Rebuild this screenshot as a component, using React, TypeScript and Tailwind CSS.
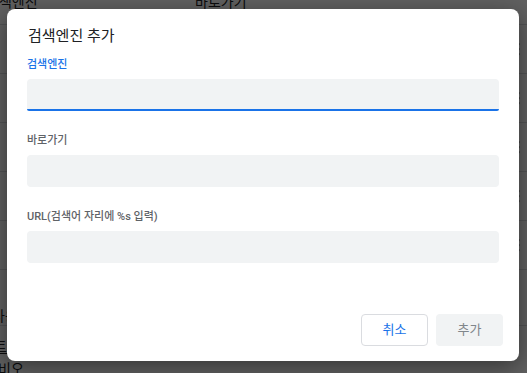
import React from "react";

const font = { fontFamily: 'Roboto, "Noto Sans CJK KR", "Noto Sans", sans-serif' };

function Dots() {
  return (
    <svg width="4" height="14" viewBox="0 0 4 14" className="text-[#5f6368]">
      <circle cx="2" cy="2" r="1.6" fill="currentColor" />
      <circle cx="2" cy="7" r="1.6" fill="currentColor" />
      <circle cx="2" cy="12" r="1.6" fill="currentColor" />
    </svg>
  );
}

function Field({ label, active }: { label: string; active?: boolean }) {
  return (
    <div className="flex flex-col">
      <div
        className={`h-4 leading-4 text-[11px] font-medium mb-[6px] ${
          active ? "text-[#1a73e8]" : "text-[#5f6368]"
        }`}
      >
        {label}
      </div>
      <div
        className={`h-[32px] rounded-[4px] bg-[#f1f3f4] ${
          active ? "border-b-2 border-[#1a73e8] rounded-b-[2px]" : ""
        }`}
      />
    </div>
  );
}

export default function App() {
  const rows = [0, 1, 2, 3, 4];
  return (
    <div className="relative w-[527px] h-[373px] overflow-hidden bg-white" style={font}>
      {/* underlying page */}
      <div className="flex flex-col w-[527px]">
        <div className="h-[25px] flex items-end border-b border-[#dadce0] text-[14px] text-[#202124] leading-none">
          <div className="w-[209px] ml-[-14px] pb-[15px]">검색엔진</div>
          <div className="pb-[15px]">바로가기</div>
        </div>
        {rows.map((r) => (
          <div key={r} className="h-[49px] flex items-center justify-end border-b border-[#dadce0] pr-[7px]">
            <Dots />
          </div>
        ))}
        <div className="h-[56px] border-b border-[#dadce0] flex items-end text-[14px] text-[#202124] leading-none">
          <span className="ml-[-8px] pb-[2px]">사용</span>
        </div>
        <div className="h-[30px] flex items-end text-[14px] text-[#202124] leading-none">
          <span className="ml-[-6px] underline pb-[2px]">트리</span>
        </div>
        <div className="pt-[6px] text-[14px] text-[#202124] leading-none">
          <span className="ml-[-2px]">비오</span>
        </div>
      </div>

      {/* overlay */}
      <div className="absolute inset-0 bg-black/[0.62] pt-[9px] pl-[7px]">
        <div className="w-[512px] h-[352px] bg-white rounded-[8px] shadow-[0_6px_24px_rgba(0,0,0,0.45)] flex flex-col px-[20px] pt-[15px] pb-[15px]">
          <div className="h-6 leading-6 text-[15px] text-[#202124] pl-[1px]">검색엔진 추가</div>
          <div className="mt-[9px] flex flex-col gap-[22px]">
            <Field label="검색엔진" active />
            <Field label="바로가기" />
            <Field label="URL(검색어 자리에 %s 입력)" />
          </div>
          <div className="mt-auto flex justify-end gap-[8px] mr-[-4px]">
            <button className="w-[67px] h-[32px] rounded-[4px] border border-[#dadce0] bg-white text-[13px] font-normal text-[#1a73e8]">
              취소
            </button>
            <button className="w-[67px] h-[32px] rounded-[4px] bg-[#f1f3f4] text-[13px] font-normal text-[#80868b]">
              추가
            </button>
          </div>
        </div>
      </div>
    </div>
  );
}
